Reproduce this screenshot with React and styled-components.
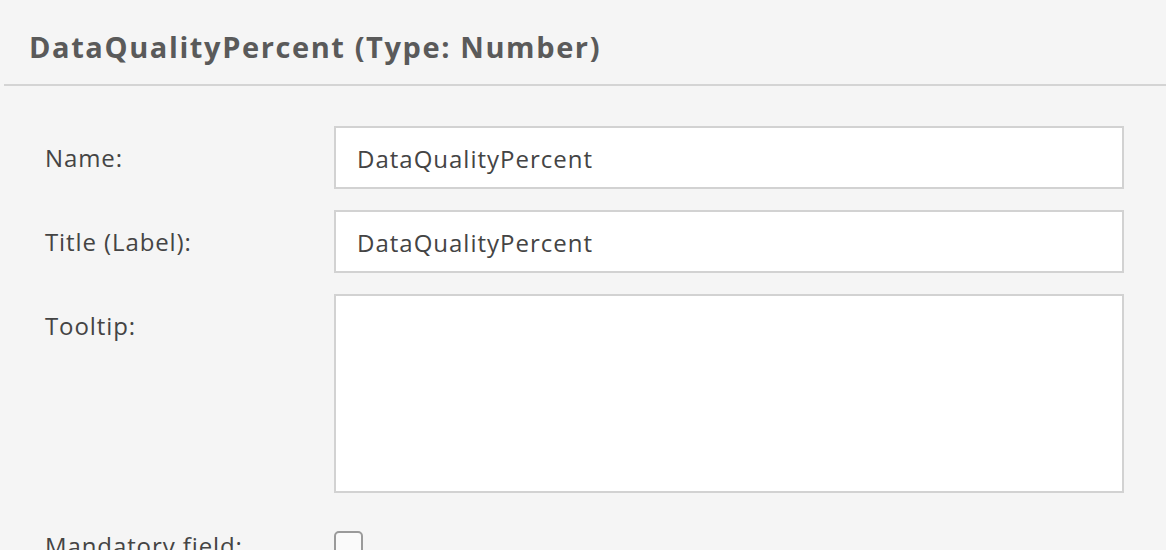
import React from "react";
import styled, { createGlobalStyle } from "styled-components";

const Global = createGlobalStyle`
  html, body { margin: 0; padding: 0; background: #f5f5f5; }
  body { font-family: "Open Sans", "Noto Sans", sans-serif; overflow: hidden; }
`;

const Page = styled.div`
  width: 1166px;
  height: 550px;
  background: #f5f5f5;
  overflow: hidden;
`;

const Header = styled.div`
  margin-left: 4px;
  height: 86px;
  box-sizing: border-box;
  padding: 27px 0 0 25px;
  border-bottom: 2px solid #d4d4d4;
`;

const Title = styled.h1`
  margin: 0;
  font-size: 29px;
  line-height: 40px;
  font-weight: 700;
  color: #5a5a5a;
  letter-spacing: 1.6px;
  white-space: nowrap;
`;

const Form = styled.div`
  display: flex;
  flex-direction: column;
  gap: 21px;
  padding: 40px 42px 0 45px;
`;

const Row = styled.div`
  display: grid;
  grid-template-columns: 289px 1fr;
  align-items: start;
`;

const Label = styled.label`
  font-size: 24px;
  letter-spacing: 0.9px;
  color: #444;
  padding-top: ${(p) => p.$top || 17}px;
  line-height: 30px;
  white-space: nowrap;
`;

const TextInput = styled.input`
  box-sizing: border-box;
  width: 790px;
  height: 63px;
  border: 2px solid #d2d2d2;
  background: #fff;
  padding: 2px 21px 0;
  font-family: "Open Sans", "Noto Sans", sans-serif;
  font-size: 24px;
  letter-spacing: 1px;
  color: #444;
  outline: none;
`;

const TextArea = styled.textarea`
  box-sizing: border-box;
  width: 790px;
  height: 199px;
  border: 2px solid #d2d2d2;
  background: #fff;
  resize: none;
  outline: none;
  display: block;
  padding: 14px 21px;
  font-family: "Open Sans", "Noto Sans", sans-serif;
  font-size: 24px;
`;

const Check = styled.span`
  display: block;
  box-sizing: border-box;
  width: 29px;
  height: 29px;
  margin-top: 17px;
  border: 2px solid #9a9a9a;
  border-radius: 5px;
  background: #fafafa;
`;

export default function App() {
  return (
    <Page>
      <Global />
      <Header>
        <Title>DataQualityPercent (Type: Number)</Title>
      </Header>
      <Form>
        <Row>
          <Label>Name:</Label>
          <TextInput defaultValue="DataQualityPercent" />
        </Row>
        <Row>
          <Label>Title (Label):</Label>
          <TextInput defaultValue="DataQualityPercent" />
        </Row>
        <Row>
          <Label>Tooltip:</Label>
          <TextArea />
        </Row>
        <Row>
          <Label $top={17}>Mandatory field:</Label>
          <Check />
        </Row>
      </Form>
    </Page>
  );
}
